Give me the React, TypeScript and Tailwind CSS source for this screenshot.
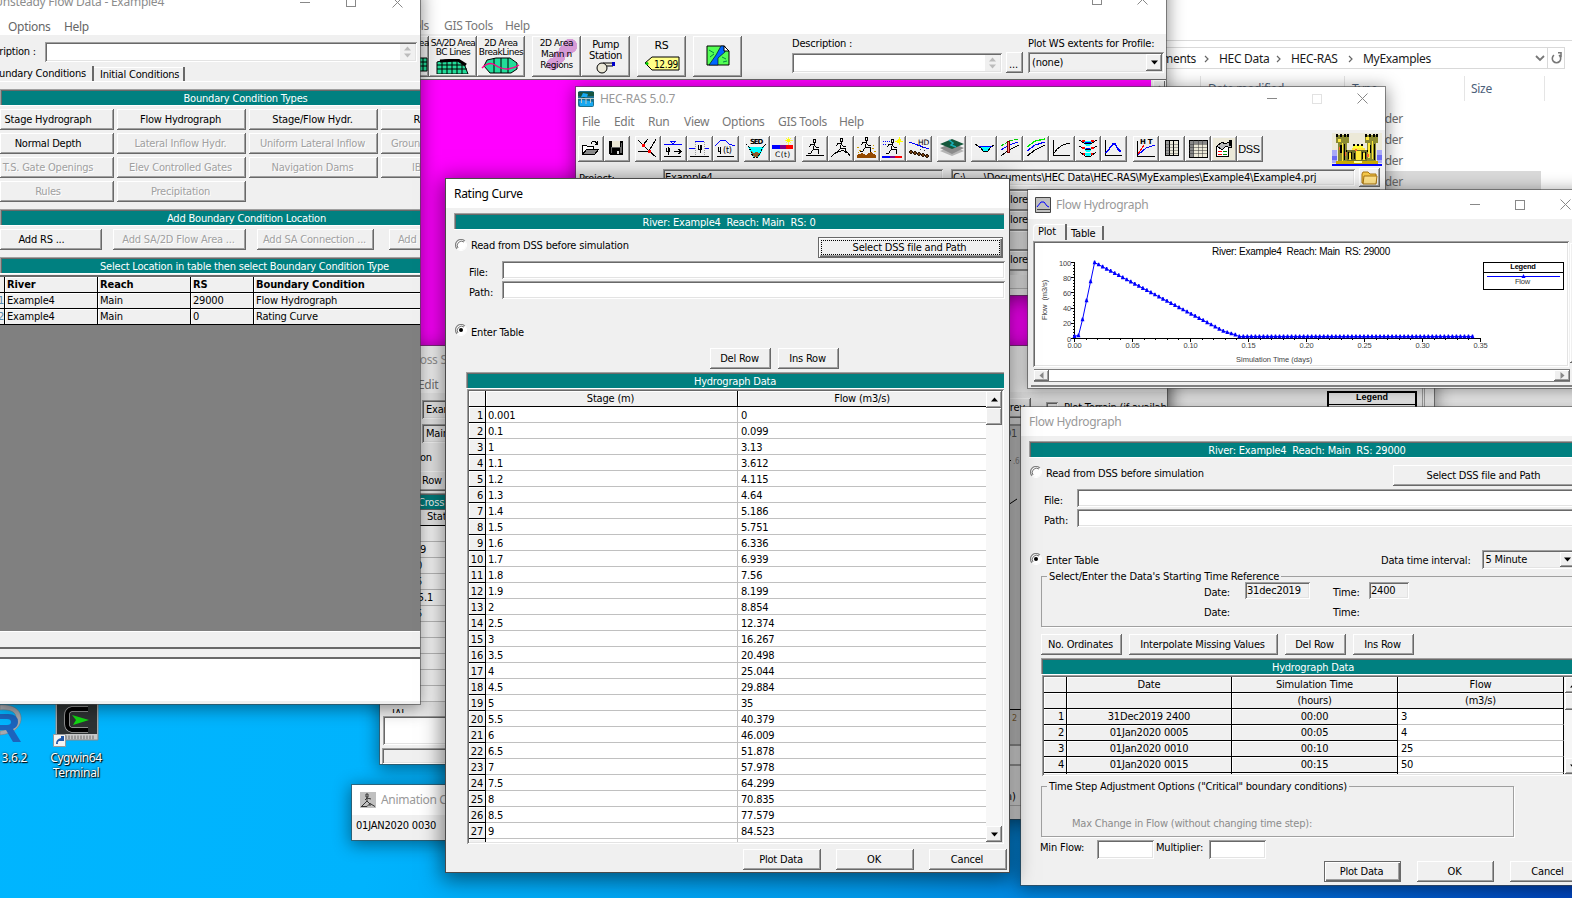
import type { ReactNode } from "react";

const UI = "font-['DejaVu_Sans_Condensed','DejaVu_Sans',sans-serif] text-[11px] leading-[16px] tracking-[-0.2px] text-black";
const SEGOE = "font-['Noto_Sans',sans-serif] text-[12px] leading-[16px] tracking-[-0.3px] whitespace-nowrap";
const RAISED = "bg-[#f0f0f0] shadow-[inset_-1px_-1px_#696969,inset_1px_1px_#fff,inset_-2px_-2px_#a0a0a0]";
const SUNKEN = "shadow-[inset_1px_1px_#a0a0a0,inset_-1px_-1px_#fff,inset_2px_2px_#696969,inset_-2px_-2px_#e3e3e3]";

function Win({ className, children }: { className: string; children?: ReactNode }) {
  return (
    <section className={`absolute flex flex-col overflow-hidden bg-[#f0f0f0] shadow-[0_0_0_1px_rgba(70,70,70,0.6),0_3px_16px_2px_rgba(0,0,0,0.42)] ${UI} ${className}`}>
      {children}
    </section>
  );
}

function Btn({ children, className = "", disabled = false, strong = false }: { children?: ReactNode; className?: string; disabled?: boolean; strong?: boolean }) {
  return (
    <button
      className={`flex shrink-0 items-center justify-center whitespace-nowrap indent-[-2px] ${strong ? "bg-[#f0f0f0] shadow-[inset_0_0_0_1px_#696969,inset_2px_2px_#fff,inset_-2px_-2px_#696969,inset_-3px_-3px_#a0a0a0]" : RAISED} ${disabled ? "text-[#a0a0a0] [text-shadow:1px_1px_#fff]" : ""} ${className}`}
    >
      {children}
    </button>
  );
}

function Teal({ children, className = "" }: { children?: ReactNode; className?: string }) {
  return (
    <div className={`flex h-[16px] shrink-0 items-center justify-center whitespace-pre bg-[#008080] pt-[3px] text-white shadow-[inset_1px_1px_#a0a0a0,inset_2px_2px_#696969,0_1px_#fff] ${className}`}>
      {children}
    </div>
  );
}

function Box({ children, className = "" }: { children?: ReactNode; className?: string }) {
  return <div className={`shrink-0 whitespace-nowrap ${SUNKEN} ${className}`}>{children}</div>;
}

function T({ children, className = "" }: { children?: ReactNode; className?: string }) {
  return <span className={`shrink-0 whitespace-pre ${className}`}>{children}</span>;
}

function Radio({ on = false, className = "" }: { on?: boolean; className?: string }) {
  return (
    <svg width="12" height="12" viewBox="0 0 12 12" className={`shrink-0 ${className}`}>
      <circle cx="6" cy="6" r="5" fill="#fff" />
      <path d="M2.1 9.9A5.4 5.4 0 0 1 9.9 2.1" fill="none" stroke="#808080" strokeWidth="1.2" />
      <path d="M3 9A4.3 4.3 0 0 1 9 3" fill="none" stroke="#505050" strokeWidth="0.8" />
      <path d="M9.9 2.1A5.4 5.4 0 0 1 2.1 9.9" fill="none" stroke="#fff" strokeWidth="1" />
      {on && <circle cx="6" cy="6" r="2" fill="#000" />}
    </svg>
  );
}

function Controls({ dimMax = false, gapA = "w-[35px]", className = "" }: { dimMax?: boolean; gapA?: string; className?: string }) {
  return (
    <div className={`flex items-center ${className}`}>
      <span className="h-px w-[10px] bg-[#888]" />
      <span className={gapA} />
      <span className={`size-[10px] border ${dimMax ? "border-[#e2e2e2]" : "border-[#888]"}`} />
      <span className={gapA} />
      <svg width="11" height="11" viewBox="0 0 11 11" className="shrink-0">
        <path d="M.5.5l10 10M10.5.5l-10 10" stroke="#888" strokeWidth="1" />
      </svg>
    </div>
  );
}

function Tri({ dir = "down", color = "#000" }: { dir?: "up" | "down" | "left" | "right"; color?: string }) {
  const d = { up: "M0 4L3.5 0L7 4z", down: "M0 0h7L3.5 4z", left: "M4 0v7L0 3.5z", right: "M0 0v7L4 3.5z" }[dir];
  return (
    <svg width="7" height="7" viewBox={dir === "up" || dir === "down" ? "0 -1.5 7 7" : "-1.5 0 7 7"}>
      <path d={d} fill={color} />
    </svg>
  );
}

/* ---------- toolbar drawings, each on a 26x26 button ---------- */

const Runner = ({ x = 0, y = 0 }: { x?: number; y?: number }) => (
  <g transform={`translate(${x} ${y})`} fill="none" stroke="#000" strokeWidth="1">
    <path d="M11.500 3.500h2v3h-2zM12.500 7l-1 6M12 8.500H8.500l-1 3M12 8.500l2 2.500h3M11.500 13h4.500v5M11.500 13l-3 4.500H5.500" />
  </g>
);

const ICONS: Record<string, ReactNode> = {
  open: (
    <g stroke="#000" fill="none">
      <path d="M4.500 18.500V9.500h4l1 1h6v3" fill="#fff" />
      <path d="M4.500 18.500l4-5h12l-4 5z" fill="#8a8a8a" />
      <path d="M13 7.500c1-3 4-3 6 0M19.500 4.500v3.500h-3" />
    </g>
  ),
  save: (
    <g>
      <path d="M5 5h14v14H6l-1-1z" fill="#000" />
      <path d="M8 5h8v6H8z" fill="#ece9d8" />
      <path d="M6 6h1v11h1v-5h8v5h2V7h-1v4H7V6z" fill="#666" />
      <path d="M9 14h6v4H9z" fill="#000" />
      <path d="M13 15h2v3h-2z" fill="#ddd" />
    </g>
  ),
  geom: (
    <g fill="none" stroke="#000">
      <path d="M3 4l11 11 7 6M21 3l-7 12M3 15.500h11M13 3L8 9" />
      <path d="M7 8h2v2H7zM13 14h2v2h-2z" fill="red" stroke="red" />
    </g>
  ),
  steady: (
    <g fill="none" stroke="#000">
      <path d="M3 8.500h18M9.500 5.500h5l-2.500 3z" stroke="#00f" />
      <path d="M3 20.500h17M13 15.500h7M17.500 13l2.500 2.500-2.500 2.500M5.500 11.500v4h3v-4M7.500 11v8" />
    </g>
  ),
  quasi: (
    <g fill="none" stroke="#000">
      <path d="M2 12.500h6M8 5.500h9M17 12.500h5" stroke="#00f" />
      <path d="M8.500 6v13M17.500 6v13" stroke="#999" strokeDasharray="1 1" />
      <path d="M3 20.500h19M11.500 9v4h3V9M13.500 9v8" />
    </g>
  ),
  unsteady: (
    <g fill="none" stroke="#000">
      <path d="M2 10l6-6h4l4 4 6 2" stroke="#00f" />
      <path d="M4 20.500h17M5.500 11v4h2v-4M7.500 11v7" />
      <text x="10" y="17" fontSize="8" stroke="none" fill="#000" fontFamily="DejaVu Sans">(t)</text>
    </g>
  ),
  sed: (
    <g>
      <text x="6" y="8" fontSize="7" fontWeight="bold" fontFamily="DejaVu Sans" textLength="13">SED</text>
      <path d="M4 11h16l-5 10h-6z" fill="#0ff" />
      <path d="M7 15l3 6h4l3-6-2 2-3-1-2 1z" fill="#8b5a2b" />
      <path d="M2 8l3 3 4 10h5l5-10 3-3" fill="none" stroke="#000" strokeDasharray="2 1" />
    </g>
  ),
  ct: (
    <g>
      <path d="M2 9h8v4H2z" fill="#00f" /><path d="M10 9h6v4h-6z" fill="#80008a" /><path d="M16 9h7v4h-7z" fill="red" />
      <circle cx="18.500" cy="4.500" r="2" fill="#ff0" />
      <path d="M18.500 1v8M15 4.500h8M16 2l5 5M21 2l-5 5" stroke="#ff0" strokeWidth=".7" />
      <text x="5" y="21" fontSize="7.500" fontFamily="DejaVu Sans" textLength="15">C(t)</text>
    </g>
  ),
  run1: (<g><Runner /><path d="M4 19.500h18" stroke="#000" /></g>),
  run2: (<g><Runner x={1} y={-1} /><path d="M3 21q4-5 10-6t9 5" stroke="#000" fill="none" /></g>),
  run3: (
    <g>
      <Runner y={-2} />
      <path d="M3 22v-3l5-2 4 2 5-3 5 3v3z" fill="#964b00" />
      <path d="M3 11h2M5 14h2M18 12h2M20 15h2M4 16h1M19 9h1" stroke="#c90" />
    </g>
  ),
  run4: (
    <g>
      <path d="M3 5.500h7M3 8l4 1" stroke="#00f" strokeDasharray="1 1" />
      <Runner />
      <path d="M2 20h8v2H2z" fill="#00f" /><path d="M10 20h5v2h-5z" fill="#80008a" /><path d="M15 20h7v2h-7z" fill="red" />
      <circle cx="19" cy="5" r="2" fill="#ff0" />
      <path d="M19 1v8M15 5h8" stroke="#ff0" />
    </g>
  ),
  hd: (
    <g>
      <text x="12" y="9" fontSize="7.500" fontFamily="DejaVu Sans">HD</text>
      <path d="M3 6l20 7" stroke="#00f" />
      <path d="M14 14l3-3M18 15l2-2" stroke="#333" strokeDasharray="2 1" />
      {[5, 9, 13, 17, 21].map((x, i) => <circle key={x} cx={x} cy={16 + i} r="1.900" fill="#6b3a10" stroke="#000" strokeWidth=".6" />)}
    </g>
  ),
  layers: (
    <g>
      <path d="M3 15l12-5 12 5-12 5z" fill="#b5b5b5" /><path d="M3 12l12-5 12 5-12 6z" fill="#8c8c8c" />
      <path d="M3 8l12-5 12 5-12 5z" fill="#14583c" /><path d="M12 4l4 3-2 2 5 2" stroke="#18b0b8" strokeWidth="1.500" fill="none" />
    </g>
  ),
  xs: (<g><path d="M8 11h12l-4 4h-4z" fill="#0ff" /><path d="M4 8l6 4 2 3h5l2-3 4-3" stroke="#000" fill="none" /><path d="M8 10.500h13" stroke="#00f" /></g>),
  prof1: (
    <g fill="none">
      <path d="M4 10l8-5 9-2" stroke="#0c0" strokeDasharray="4 1" /><path d="M4 14l8-5 9-3" stroke="#00f" /><path d="M4 20l8-6 10-5" stroke="#000" />
      <path d="M10.500 5.500h2v11h-2z" stroke="#800000" fill="#f88" />
    </g>
  ),
  prof2: (
    <g fill="none" strokeWidth="1.200">
      <path d="M4 11l8-6 10-2" stroke="#0e0" /><path d="M4 15l8-6 10-3" stroke="#00f" /><path d="M4 20l8-6 10-5" stroke="#000" />
    </g>
  ),
  rating: (<path d="M4.500 4v15.500H21M5 17c4-6 8-9 16-10" fill="none" stroke="#000" />),
  xyz: (
    <g fill="none" stroke="#000">
      <path d="M8 5h10l-3 5h-4zM9 12h8l-2 4h-4zM9 17h8l-3 4h-2z" fill="#0ff" stroke="none" />
      <path d="M4 4l5 3h8l5-3M4 10l6 3h6l6-3M5 16l5 4h6l5-4" />
      <path d="M7 5h3M16 5h3M7 12h3M16 12h3M8 18h2M16 18h2" stroke="red" strokeWidth="2" />
      <path d="M10 6h6M11 12h4" stroke="#00f" />
    </g>
  ),
  hydro: (<g fill="none"><path d="M4.500 4v15.500H21" stroke="#000" /><path d="M5 17l7-9 2 0 3 5 3 3" stroke="#00f" strokeWidth="1.500" /></g>),
  ht: (
    <g fill="none">
      <text x="7" y="8" fontSize="7" fontFamily="DejaVu Sans" fill="#000" fontWeight="bold" letterSpacing="2">HT</text>
      <path d="M4.500 5v15.500H22" stroke="#000" /><path d="M5 18l6-9" stroke="red" /><path d="M5 19l8-7 9-3" stroke="#00f" />
    </g>
  ),
  tab1: (
    <g>
      <path d="M6 4h14v16H6z" fill="#000" /><path d="M7 5h3v14H7z" fill="#999" /><path d="M11 5h3v14h-3zM15 5h4v14h-4z" fill="#ece9d8" />
      <path d="M7 8.500h12M7 11.500h12M7 14.500h12M7 17.500h12" stroke="#333" strokeWidth=".4" />
    </g>
  ),
  tab2: (
    <g>
      <path d="M4 4h18v17H4z" fill="#ece9d8" stroke="#000" /><path d="M4.500 4.500h17v3h-17zM4.500 4.500h4v16h-4z" fill="#888" />
      <path d="M4 8.500h18M4 11.500h18M4 14.500h18M4 17.500h18M8.500 4v17M13 4v17M17.500 4v17" stroke="#333" strokeWidth=".5" />
    </g>
  ),
  props: (
    <g>
      <path d="M2 2h22v22H2z" fill="#ece9d8" />
      <path d="M5.500 10.500h12v10h-12z" fill="#fff" stroke="#000" />
      <path d="M7 15.500h4M7 18.500h4" stroke="red" /><path d="M12 15.500h4M12 18.500h4" stroke="#080" />
      <path d="M6 10l5-4 3 2 6-3v6l-3 0-2-1-4 4z" fill="#bbb" stroke="#000" /><path d="M18 4h3v6h-3z" fill="#000" />
    </g>
  ),
};

function Tool({ name, className = "" }: { name: string; className?: string }) {
  return (
    <span className={`block h-[26px] w-[26px] shrink-0 ${RAISED} ${className}`}>
      <svg width="26" height="26" viewBox="0 0 26 26" fill="#000" shapeRendering="crispEdges">{ICONS[name]}</svg>
    </span>
  );
}

/* ---------- windows ---------- */

function Explorer() {
  const crumbs = ["HEC Data", "HEC-RAS", "MyExamples"];
  return (
    <section className={`absolute left-[1150px] top-0 flex h-[500px] w-[422px] flex-col bg-white ${SEGOE} text-[#1a1a1a]`}>
      <div className="h-[41px] border-b border-[#d9d9d9]" />
      <div className="mt-[6px] flex h-[22px] w-[415px] shrink-0 items-center border border-[#d9d9d9]">
        <span className="flex w-[45px] justify-end pt-px">ments</span>
        {crumbs.map((c, i) => (
          <span key={c} className="flex items-center pt-px">
            <svg width="5" height="8" viewBox="0 0 5 8" className="ml-[8px] mr-[10px]"><path d="M1 1l3 3-3 3" fill="none" stroke="#666" strokeWidth="1.200" /></svg>
            <span className={i === 2 ? "w-[68px]" : "w-[49px]"}>{c}</span>
          </span>
        ))}
        <svg width="10" height="7" viewBox="0 0 10 7" className="ml-auto mr-[2px]"><path d="M1 1l4 4 4-4" fill="none" stroke="#777" strokeWidth="1.800" /></svg>
        <span className="flex h-full w-[17px] items-center justify-center border-l border-[#d9d9d9]">
          <svg width="11" height="12" viewBox="0 0 11 12"><path d="M3 3.200a4.200 4.200 0 1 0 5 0M4 .8h-3v4.400" transform="matrix(-1 0 0 1 11 0)" fill="none" stroke="#777" strokeWidth="1.600" /></svg>
        </span>
      </div>
      <div className="mt-[7px] flex h-[25px] shrink-0 items-center text-[#4c607a]">
        <span className="ml-[50px] flex h-full w-[144px] items-center border-l border-[#e5e5e5] pl-[7px]">Date modified</span>
        <span className="flex h-full w-[120px] items-center border-l border-[#e5e5e5] pl-[7px]">Type</span>
        <span className="flex h-full w-[81px] items-center border-x border-[#e5e5e5] pl-[6px]">Size</span>
      </div>
      <div className="mt-[7px] flex w-[391px] flex-col text-[#6d6d6d]">
        {[0, 1, 2, 3].map((i) => (
          <div key={i} className={`flex h-[21px] items-center ${i === 3 ? "bg-[#d9d9d9]" : ""}`}>
            <span className="flex w-[253px] justify-end">File folder</span>
          </div>
        ))}
      </div>
    </section>
  );
}

function BigBtn({ children, className = "" }: { children?: ReactNode; className?: string }) {
  return <div className={`flex h-[41px] shrink-0 flex-col items-center overflow-hidden whitespace-nowrap font-['DejaVu_Sans',sans-serif] text-[9px] leading-[9px] tracking-[-0.4px] ${RAISED} ${className}`}>{children}</div>;
}

function GeometryWindow() {
  return (
    <Win className="left-[300px] top-[-30px] h-[500px] w-[866px]">
      <div className="flex h-[64px] shrink-0 flex-col bg-white">
        <Controls className="ml-[747px] mt-[24px]" gapA="w-[35px]" />
        <div className={`mt-[13px] flex ${SEGOE} text-[#777]`}>
          <span className="flex w-[129px] justify-end">Tools</span>
          <span className="ml-[15px] w-[61px]">GIS Tools</span>
          <span>Help</span>
        </div>
      </div>
      <div className="flex h-[45px] shrink-0 items-start pt-[2px]">
        <BigBtn className="ml-[81px] w-[48px]">
          <span className="mt-[3px] self-end">2D Area</span>
          <svg width="40" height="16" className="mt-[9px] self-end"><path d="M0 1h38v13H0z" fill="#2d9" stroke="#000" /><path d="M30 1v13M34 1v13M0 5h38M0 9h38" stroke="#000" /></svg>
        </BigBtn>
        <BigBtn className="w-[48px]">
          <span className="mt-[3px] tracking-[-0.7px]">SA/2D Area</span>
          <span className="tracking-[-0.5px]">BC Lines</span>
          <svg width="34" height="15" viewBox="0 0 34 15" className="mt-[2px]"><path d="M1 3l8-2h12l8 6 3 8H1z" fill="#2d9" stroke="#000" /><path d="M1 6h28M1 10h30M6 2v13M11 1v14M16 1v14M21 2v13M26 5v10" stroke="#000" /><path d="M4 2l18-1 8 5" stroke="#000" strokeWidth="3" fill="none" /></svg>
        </BigBtn>
        <BigBtn className="w-[48px]">
          <span className="mt-[3px]">2D Area</span>
          <span className="tracking-[-0.5px]">BreakLines</span>
          <svg width="40" height="17" viewBox="0 0 40 17"><path d="M3 9l3-6 9-2h14l7 5v6l-6 4H9z" fill="#2d9" stroke="#000" /><path d="M13 1v15M20 1v15M27 1v15" stroke="#000" /><path d="M1 11q7-7 13-3t12 4 12-4" fill="none" stroke="#f08" strokeWidth="1.500" /></svg>
        </BigBtn>
        <BigBtn className="ml-[7px] w-[49px]">
          <div className="flex size-full flex-col items-center bg-[radial-gradient(circle_at_38px_10px,#d69ad6_7px,transparent_7.500px),radial-gradient(circle_at_33px_15px,#d69ad6_6px,transparent_6.500px),radial-gradient(circle_at_27px_21px,#d69ad6_6px,transparent_6.500px),radial-gradient(circle_at_21px_28px,#d69ad6_6px,transparent_6.500px)] leading-[11px]">
            <span className="mt-[2px]">2D Area</span><span>Mann n</span><span>Regions</span>
          </div>
        </BigBtn>
        <BigBtn className="w-[49px] text-[10px] leading-[11px] tracking-[-0.2px]">
          <span className="mt-[3px]">Pump</span><span>Station</span>
          <svg width="22" height="13" viewBox="0 0 22 13"><path d="M8 2h10v3h-6" fill="#ece9d8" stroke="#000" /><path d="M17 1h3v4h-3z" fill="#00c" /><circle cx="7" cy="7" r="5" fill="#ece9d8" stroke="#000" /></svg>
        </BigBtn>
        <BigBtn className="ml-[7px] w-[49px] text-[11px] leading-[12px]">
          <span className="mt-[4px]">RS</span>
          <svg width="36" height="15" viewBox="0 0 36 15" className="mt-[4px]"><path d="M1 7l7-6h27v13H8z" fill="#ff8" stroke="#000" /><circle cx="3" cy="7.500" r="1.500" fill="#0c0" /><text x="10" y="11.500" fontSize="10.500" textLength="24" lengthAdjust="spacingAndGlyphs" fontFamily="DejaVu Sans Condensed">12.99</text></svg>
        </BigBtn>
        <BigBtn className="ml-[7px] w-[49px]">
          <svg width="24" height="21" viewBox="0 0 24 21" className="mt-[9px]"><path d="M1 1h17l5 5v14H1z" fill="#5f5" stroke="#000" /><path d="M15 1h4v6L12 13v7H3l7-10z" fill="#06f" stroke="#000" strokeWidth=".6" /><path d="M3 5l5 3M4 12l4-3M16 12l4 2M17 17l4-1" stroke="#084" /><path d="M18 1l5 5h-5z" fill="#fff" stroke="#000" /></svg>
        </BigBtn>
        <div className="ml-[50px] flex w-[233px] flex-col">
          <span>Description :</span>
          <div className="flex items-center">
            <Box className="flex h-[20px] w-[210px] justify-end bg-white p-[2px]">
              <span className="flex w-[15px] flex-col items-center justify-between bg-[#f0f0f0] py-[1px]"><Tri dir="up" color="#bbb" /><Tri color="#bbb" /></span>
            </Box>
            <Btn className="ml-[4px] h-[21px] w-[17px] pt-[5px]">...</Btn>
          </div>
        </div>
        <div className="ml-[3px] flex flex-col">
          <T>Plot WS extents for Profile:</T>
          <Box className="flex h-[21px] w-[136px] items-center justify-between pl-[4px] pr-[2px]">
            (none) <Btn className="h-[17px] w-[16px]"><Tri /></Btn>
          </Box>
        </div>
      </div>
      <div className="flex flex-1 border-t border-[#696969]">
        <div className="w-[851px] bg-[#ff00ff]" />
        <div className="ml-[2px] flex w-[12px] justify-center bg-[#f0f0f0] pt-[4px] shadow-[inset_1px_1px_#fff,inset_-1px_0_#696969]"><Tri dir="up" color="#999" /></div>
      </div>
    </Win>
  );
}

function Castle() {
  return (
    <svg width="50" height="33" viewBox="0 0 50 33" shapeRendering="crispEdges" className="shrink-0">
      <path d="M0 0h50v33H0z" fill="#ece9d8" />
      <path d="M0 17h5v13H0zM45 17h5v13h-5z" fill="#a8a8f8" />
      <path d="M0 23h5v4H0zM45 22h5v5h-5z" fill="#6a6af4" />
      <path d="M4 2h13v8H4zM33 2h13v8H33z" fill="#8a8a30" />
      <path d="M6 8h9v22H6zM35 8h9v22h-9z" fill="#8a8a30" />
      <path d="M4 1h2v3H4zM8 1h2v3H8zM12 1h2v3h-2zM15 1h2v3h-2zM33 1h2v3h-2zM37 1h2v3h-2zM41 1h2v3h-2zM44 1h2v3h-2zM8 12h2v8H8zM12 11h1v16h-1zM37 12h2v8h-2zM42 11h1v16h-1zM14 17h22v2H14z" fill="#000" />
      <path d="M6 6h3v3H6zM36 10h2v15h-2zM40 8h1v18h-1zM10 10h1v18h-1zM34 4h3v3h-3z" fill="#ffe838" />
      <path d="M15 17h20v12H15z" fill="#6e6e28" />
      <path d="M21 12h10v5H21z" fill="#ff3" />
      <path d="M21 11h2v2h-2zM25 11h2v2h-2zM29 11h2v2h-2zM16 19h1v7h-1zM19 19h1v7h-1zM22 20h1v6h-1zM30 19h1v7h-1zM33 19h1v7h-1z" fill="#000" />
      <path d="M20 15h13v2H20zM24 18h5v9h-5zM17 20h2v7h-2zM31 20h2v7h-2z" fill="#ffe838" />
      <path d="M7 14h1v3H7zM13 19h1v4h-1zM35 21h2v3h-2zM23 16h2v2h-2z" fill="#f63" />
      <path d="M4 28h42v3H4z" fill="#c8a800" /><path d="M22 28h8v2h-8z" fill="#ff9" />
      <path d="M0 31h50v2H0z" fill="#00f" />
    </svg>
  );
}

function HecRasWindow() {
  const menu: [string, string][] = [["File", "w-[32px]"], ["Edit", "w-[34px]"], ["Run", "w-[36px]"], ["View", "w-[38px]"], ["Options", "w-[56px]"], ["GIS Tools", "w-[61px]"], ["Help", "w-[40px]"]];
  return (
    <Win className="left-[576px] top-[87px] h-[208px] w-[809px]">
      <div className="flex h-[43px] shrink-0 flex-col bg-white">
        <div className="flex h-[23px] items-center">
          <svg width="16" height="16" viewBox="0 0 16 16" className="ml-[2px]"><rect width="16" height="16" rx="2" fill="#1c6f8c" /><path d="M0 1h16v4H9L6 7 0 5z" fill="#175540" /><path d="M5 2l5 1-1 3H3zM1 10l4-1 6 1 4 1v4H2z" fill="#18a8f0" /><path d="M0 7.500h16M3.500 7v5M8 7v6M12.500 7v5" stroke="#b8c8c8" /></svg>
          <span className={`ml-[6px] text-[#999] ${SEGOE}`}>HEC-RAS 5.0.7</span>
          <Controls dimMax className="ml-auto mr-[17px]" />
        </div>
        <div className={`flex pl-[6px] pt-[4px] text-[#777] ${SEGOE}`}>{menu.map(([m, w]) => <span key={m} className={w}>{m}</span>)}</div>
      </div>
      <div className="flex h-[37px] shrink-0 items-center pl-[2px]">
        <Tool name="open" /><Tool name="save" />
        <Tool name="geom" className="ml-[5px]" /><Tool name="steady" /><Tool name="quasi" /><Tool name="unsteady" />
        <Tool name="sed" className="ml-[5px]" /><Tool name="ct" />
        <Tool name="run1" className="ml-[6px]" /><Tool name="run2" /><Tool name="run3" /><Tool name="run4" /><Tool name="hd" />
        <span className={`ml-[5px] block h-[26px] w-[29px] shrink-0 ${RAISED}`}><svg width="29" height="26" viewBox="0 0 29 26">{ICONS.layers}</svg></span>
        <Tool name="xs" className="ml-[5px]" /><Tool name="prof1" /><Tool name="prof2" /><Tool name="rating" /><Tool name="xyz" /><Tool name="hydro" />
        <Tool name="ht" className="ml-[6px]" /><Tool name="tab1" /><Tool name="tab2" /><Tool name="props" />
        <Btn className="h-[26px] w-[26px] font-['Liberation_Sans',sans-serif] text-[11px] tracking-[-0.4px]">DSS</Btn>
        <span className="ml-auto mr-[3px] pt-[2px]"><Castle /></span>
      </div>
      <div className="flex h-[21px] shrink-0 items-center">
        <T className="ml-[3px] w-[84px] pt-[2px]">Project:</T>
        <Box className="h-[17px] w-[280px] bg-[#f0f0f0] px-[2px] pt-[1px]">Example4</Box>
        <Box className="ml-[8px] h-[17px] w-[404px] bg-[#f0f0f0] px-[2px] pt-[1px]"><span className="whitespace-pre">C:\...   \Documents\HEC Data\HEC-RAS\MyExamples\Example4\Example4.prj</span></Box>
        <span className={`ml-[4px] flex h-[19px] w-[21px] items-center justify-center ${RAISED}`}>
          <svg width="17" height="14" viewBox="0 0 17 14"><path d="M1 12V3l1-2h5l2 2h6v9z" fill="#f5c84a" stroke="#a87410" /><path d="M2 13l1-8h13l-1 8z" fill="#ffe28a" stroke="#a87410" /></svg>
        </span>
      </div>
      <div className="mt-px h-[2px] w-[804px] shrink-0 bg-[#808080]" />
      <div className="ml-[432px] flex w-[22px] flex-col shadow-[inset_8px_0_8px_rgba(0,0,0,0.12)]">
        {["lore", "lore", "", "lore"].map((t, i) => (
          <div key={i} className="flex h-[20px] shrink-0 items-center border-b-2 border-[#8a8a8a] bg-[#e8e8e8] pl-[2px] shadow-[inset_0_1px_#fff]">{t}</div>
        ))}
        <div className="mt-[4px] h-[14px] border-b border-[#bbb] bg-[#eaeaea]" />
      </div>
    </Win>
  );
}

function CrossSectionWindows() {
  const vals = ["", ".29", "10", "15", "15.1", "15", "", "", "", "", ""];
  return (
    <>
      <Win className="left-[600px] top-[346px] h-[473px] w-[567px]">
        <div className="h-[46px] shrink-0 bg-[#f8f8f8]" />
        <div className="flex h-[32px] shrink-0 items-center">
          <Btn className="ml-[390px] h-[20px] w-[41px] justify-end pr-[6px]">Prev</Btn>
          <span className={`ml-[15px] size-[12px] shrink-0 bg-[#f0f0f0] ${SUNKEN}`} />
          <T className="ml-[6px]">Plot Terrain (if available)</T>
        </div>
        <div className="flex h-[322px] shrink-0 flex-col border-y-2 border-[#999] bg-[#d4d4d4] pl-[405px]">
          <span className="text-[#555]">01</span>
          <svg width="24" height="60" viewBox="0 0 24 60" className="mt-[14px] shrink-0"><path d="M0 4.500h6M0 51l12-8" stroke="#000" /><text x="8" y="8" fontSize="8" fill="#888">.6</text></svg>
          <span className="mt-[193px] h-px w-[20px] shrink-0 bg-black" />
          <span className="pl-[7px] text-[9px] text-[#863]">2</span>
        </div>
        <div className="h-[20px] shrink-0 border-b-2 border-[#a0a0a0]" />
        <div className="mt-[22px] flex h-[18px] shrink-0 items-end border-b border-[#bbb] pl-[400px]">on)</div>
      </Win>
      <Win className="left-[380px] top-[346px] h-[418px] w-[300px]">
        <div className={`flex h-[47px] shrink-0 flex-col bg-[#fbfbfb] text-[#999] ${SEGOE}`}>
          <span className="mt-[6px] flex w-[70px] justify-start pl-[28px]">Cross Section</span>
          <span className="mt-[9px] pl-[38px] text-[#777]">Edit</span>
        </div>
        <Box className="ml-[42px] mt-[7px] flex h-[19px] w-[150px] items-center pl-[4px] pt-px">Example4</Box>
        <Box className="ml-[42px] mt-[5px] flex h-[19px] w-[150px] items-center pl-[4px] pt-px">Main</Box>
        <span className="ml-[20px] mt-[7px]">Option</span>
        <Btn className="ml-[14px] mt-[5px] h-[20px] w-[60px] justify-end pr-[12px]">Ins Row</Btn>
        <Teal className="mt-[2px] w-[250px] !justify-start pl-[38px]">Cross Section</Teal>
        <div className="flex h-[17px] shrink-0 items-center border-b border-black pl-[47px] shadow-[inset_0_1px_#696969]">Station</div>
        {vals.map((v, i) => (
          <div key={i} className="flex h-[16px] shrink-0 items-center border-b border-[#c0c0c0] bg-white">
            <span className={`flex justify-end ${v === "15.1" ? "w-[53px]" : v === ".29" ? "w-[46px]" : "w-[42px]"}`}>{v}</span>
          </div>
        ))}
        <div className="mt-[5px] h-[8px] overflow-hidden pl-[12px] leading-[14px]">ΙΑΙ</div>
        <Box className="ml-[3px] mt-[3px] h-[29px] w-[290px] bg-white" />
        <Box className="ml-[2px] mt-[3px] h-[16px] w-[292px]" />
      </Win>
    </>
  );
}

function ProfilePlotWindow() {
  return (
    <>
      <Win className="left-[1300px] top-[300px] h-[200px] w-[290px] !bg-white" />
      <Win className="left-[1167px] top-[300px] h-[200px] w-[267px] !bg-[#f8f8f8]">
        <div className="flex h-full items-end">
          <div className="ml-[160px] flex h-[109px] w-[90px] flex-col border-2 border-black bg-white font-['Liberation_Sans',sans-serif] text-[9px] font-bold leading-[9px] tracking-normal">
            <span className="flex h-[12px] items-center justify-center border-b border-black pb-[2px]">Legend</span>
          </div>
          <div className="ml-[5px] h-full w-[3px] border-x border-[#aaa]" />
        </div>
      </Win>
    </>
  );
}

function UnsteadyWindow() {
  const rows: [string, boolean][][] = [
    [["Stage Hydrograph", true], ["Flow Hydrograph", true], ["Stage/Flow Hydr.", true], ["Rating Curve", true]],
    [["Normal Depth", true], ["Lateral Inflow Hydr.", false], ["Uniform Lateral Inflow", false], ["Groundwater Interflow", false]],
    [["T.S. Gate Openings", false], ["Elev Controlled Gates", false], ["Navigation Dams", false], ["IB Stage/Flow", false]],
    [["Rules", false], ["Precipitation", false]],
  ];
  const cell = "flex h-full items-center pl-[2px] border-r border-black shadow-[inset_1px_1px_#fff]";
  return (
    <Win className="left-0 top-[-10px] h-[714px] w-[420px]">
      <div className="flex h-[45px] shrink-0 flex-col bg-white">
        <div className={`flex h-[25px] items-center text-[#8c8c8c] ${SEGOE}`}>
          <span className="flex w-[164px] justify-end pb-px tracking-[-0.25px]">Unsteady Flow Data - Example4</span>
          <Controls className="ml-[136px] pb-px" gapA="w-[36px]" />
        </div>
        <div className={`flex pl-[8px] pt-[4px] text-[#666] ${SEGOE}`}><span className="w-[56px]">Options</span><span>Help</span></div>
      </div>
      <div className="flex h-[31px] shrink-0 items-center pt-[2px]">
        <span className="flex w-[36px] shrink-0 justify-end whitespace-nowrap pt-px">Description :</span>
        <Box className="ml-[9px] flex h-[20px] w-[372px] justify-end bg-white p-[2px]">
          <span className="flex w-[15px] flex-col items-center justify-between bg-[#f0f0f0] py-[1px]"><Tri dir="up" color="#bbb" /><Tri color="#bbb" /></span>
        </Box>
      </div>
      <div className="flex h-[16px] shrink-0 items-end border-b border-white">
        <span className="flex h-[15px] w-[94px] shrink-0 items-start justify-end whitespace-nowrap border-r-2 border-[#696969] pr-[6px]"><span>Boundary Conditions</span></span>
        <span className="flex h-[14px] w-[91px] items-start whitespace-nowrap border-r-2 border-[#696969] pl-[6px] shadow-[inset_0_1px_#fff]">Initial Conditions</span>
      </div>
      <Teal className="mt-[7px] h-[15px] pl-[71px]">Boundary Condition Types</Teal>
      <div className="mt-[4px] flex w-[520px] flex-col gap-[3px]">
        {rows.map((r, i) => (
          <div key={i} className="flex gap-[3px]">
            {r.map(([t, on], j) => (
              <Btn key={t} disabled={!on} className={j === 0 ? "h-[21px] w-[114px] !justify-center pr-[16px]" : "h-[21px] w-[129px]"}>{t}</Btn>
            ))}
          </div>
        ))}
      </div>
      <Teal className="mt-[7px] h-[15px] pl-[73px]">Add Boundary Condition Location</Teal>
      <div className="mt-[4px] flex w-[520px]">
        <Btn className="h-[21px] w-[102px] pr-[17px]">Add RS ...</Btn>
        <Btn disabled className="ml-[11px] h-[21px] w-[133px]">Add SA/2D Flow Area ...</Btn>
        <Btn disabled className="ml-[11px] h-[21px] w-[117px]">Add SA Connection ...</Btn>
        <Btn disabled className="ml-[15px] h-[21px] w-[117px]">Add Pump Station ...</Btn>
      </div>
      <Teal className="mt-[7px] h-[15px] pl-[69px]">Select Location in table then select Boundary Condition Type</Teal>
      <div className="mt-[2px] flex flex-1 flex-col border-t-2 border-[#696969] bg-[#808080]">
        {[["", "River", "Reach", "RS", "Boundary Condition"], ["1", "Example4", "Main", "29000", "Flow Hydrograph"], ["2", "Example4", "Main", "0", "Rating Curve"]].map((r, i) => (
          <div key={i} className={`flex h-[16px] shrink-0 items-center whitespace-nowrap border-b border-black bg-[#f0f0f0] ${i === 0 ? "font-bold tracking-[-0.1px]" : ""}`}>
            <span className="flex h-full w-[5px] items-center justify-end border-r border-black text-[#58a]">{r[0]}</span>
            <span className={`${cell} w-[93px]`}>{r[1]}</span>
            <span className={`${cell} w-[93px]`}>{r[2]}</span>
            <span className={`${cell} w-[63px]`}>{r[3]}</span>
            <span className="flex h-full flex-1 items-center pl-[2px] shadow-[inset_1px_1px_#fff]">{r[4]}</span>
          </div>
        ))}
      </div>
      <div className="h-[18px] shrink-0 border-b-2 border-[#696969] shadow-[inset_0_1px_#fff]" />
      <div className="h-[8px] shrink-0" />
      <div className="h-[46px] shrink-0 border-b-2 border-t-2 border-b-[#f0f0f0] border-t-[#696969] bg-white" />
      <div className="h-px shrink-0" />
    </Win>
  );
}

const FLOWS: number[] = (() => {
  const v = [3, 4, 25, 50, 75, 100];
  for (let i = 6; i < 100; i++) v.push(i < 38 ? 100 - (i - 5) * 2.82 : i < 41 ? 8 - (i - 38) * 1.6 : 2.5);
  return v;
})();

function HydrographChart() {
  const X = (i: number) => 39.5 + i * 4.02;
  const Y = (v: number) => 95.5 - v * 0.76;
  return (
    <svg width="532" height="122" viewBox="0 0 532 122" fontFamily="Liberation Sans" className="block">
      <text x="177" y="12" fontSize="10" textLength="178" xmlSpace="preserve">River: Example4  Reach: Main  RS: 29000</text>
      <g stroke="#000" shapeRendering="crispEdges">
        <path d="M39.500 19V96M38 95.500H446" fill="none" />
        {Array.from({ length: 26 }, (_, i) => <path key={i} d={`M${i % 5 ? 37.500 : 36} ${95.500 - i * 3.040}H40`} />)}
        {Array.from({ length: 36 }, (_, i) => <path key={i} d={`M${39.500 + i * 11.600} 95V${i % 5 ? 97 : 99}`} />)}
      </g>
      <g fontSize="7.500" fill="#444">
        {[0, 20, 40, 60, 80, 100].map((v) => <text key={v} x="36" y={Y(v) + 3} textAnchor="end">{v}</text>)}
        {[0, 1, 2, 3, 4, 5, 6, 7].map((v) => <text key={v} x={39.500 + v * 58} y="105" textAnchor="middle">{(v * 0.05).toFixed(2)}</text>)}
        <text x="201" y="119" textLength="76">Simulation Time (days)</text>
        <text transform="translate(11.500 77) rotate(-90)" textLength="40" xmlSpace="preserve">Flow  (m3/s)</text>
      </g>
      <polyline points={FLOWS.map((v, i) => `${X(i)},${Y(v)}`).join(" ")} fill="none" stroke="#00f" />
      <path d={FLOWS.map((v, i) => `M${X(i) - 1.900} ${Y(v) + 1.700}h3.800l-1.300 -3.700h-1.200z`).join("")} fill="#00f" />
      <path d="M448.500 19.500h80v27h-80zM448.500 29.500h80" fill="#fff" stroke="#000" shapeRendering="crispEdges" strokeWidth="1" />
      <text x="488" y="25.500" fontSize="7.500" fontWeight="bold" textAnchor="middle">Legend</text>
      <path d="M452 33.500h73" stroke="#00f" /><path d="M486.500 35h4l-2-4z" fill="#00f" />
      <text x="487.500" y="41" fontSize="7.500" textAnchor="middle" fill="#333">Flow</text>
    </svg>
  );
}

function FlowPlotWindow() {
  return (
    <Win className="left-[1028px] top-[190px] h-[198px] w-[560px]">
      <div className="flex h-[29px] shrink-0 items-center bg-white pr-[17px]">
        <svg width="16" height="16" viewBox="0 0 16 16" className="ml-[7px]"><path d="M.5.500h15v15H.5z" fill="#c0c0c0" stroke="#444" /><path d="M2 12.500h13" stroke="#444" /><path d="M2 10l4-5h3l3 4 2 1" fill="none" stroke="#00f" /></svg>
        <span className={`ml-[5px] text-[#999] ${SEGOE}`}>Flow Hydrograph</span>
        <Controls className="ml-auto" />
      </div>
      <div className="flex h-[22px] shrink-0 items-end pb-px">
        <span className="ml-[5px] flex h-[16px] w-[34px] items-start rounded-tl-sm border-r-2 border-[#696969] pl-[5px] shadow-[inset_1px_1px_#fff]">Plot</span>
        <span className="flex h-[14px] w-[37px] items-start border-r-2 border-[#696969] pl-[4px] shadow-[inset_0_1px_#fff]">Table</span>
      </div>
      <div className="ml-[5px] flex">
        <div className={`h-[126px] w-[536px] bg-white p-[2px] ${SUNKEN}`}><HydrographChart /></div>
        <div className={`ml-[1px] mt-[2px] h-[120px] w-[16px] ${RAISED}`} />
      </div>
      <div className="ml-[6px] mt-[2px] flex h-[13px] w-[536px] border-y border-[#808080] bg-white">
        <Btn className="h-[11px] w-[15px]"><Tri dir="left" color="#888" /></Btn>
        <span className="flex-1" />
        <Btn className="h-[11px] w-[16px]"><Tri dir="right" color="#888" /></Btn>
      </div>
      <div className="ml-[3px] mt-[3px] h-[2px] bg-[#808080]" />
    </Win>
  );
}

function FlowEditor() {
  const rows = [["1", "31Dec2019 2400", "00:00", "3"], ["2", "01Jan2020 0005", "00:05", "4"], ["3", "01Jan2020 0010", "00:10", "25"], ["4", "01Jan2020 0015", "00:15", "50"], ["", "", "", ""]];
  const c = "flex h-full shrink-0 items-center border-r border-black bg-[#f0f0f0] shadow-[inset_1px_1px_#fff]";
  return (
    <Win className="left-[1021px] top-[407px] h-[478px] w-[572px]">
      <div className={`flex h-[29px] shrink-0 items-center bg-white pl-[8px] text-[#999] ${SEGOE}`}>Flow Hydrograph</div>
      <Teal className="ml-[8px] mt-[5px] w-[556px]">River: Example4  Reach: Main  RS: 29000</Teal>
      <div className="mt-[8px] flex h-[21px] shrink-0 items-start">
        <Radio className="ml-[9px] mt-[1px]" /><T className="ml-[4px] mt-px">Read from DSS before simulation</T>
        <Btn className="ml-auto mr-[17px] h-[21px] w-[183px]">Select DSS file and Path</Btn>
      </div>
      <div className="mt-[3px] flex h-[18px] shrink-0"><T className="ml-[23px] w-[33px] pt-[4px]">File:</T><Box className="h-[18px] w-[508px] bg-white" /></div>
      <div className="mt-[2px] flex h-[18px] shrink-0"><T className="ml-[23px] w-[33px] pt-[4px]">Path:</T><Box className="h-[18px] w-[508px] bg-white" /></div>
      <div className="mt-[22px] flex h-[20px] shrink-0 items-center">
        <Radio on className="ml-[9px]" /><T className="ml-[4px] w-[56px] pt-[3px]">Enter Table</T>
        <T className="ml-[279px] pt-[3px]">Data time interval:</T>
        <Box className="ml-[11px] flex h-[19px] w-[96px] items-center justify-between pl-[4px] pr-[2px]"><span className="pt-[2px]">5 Minute</span> <Btn className="h-[15px] w-[16px]"><Tri /></Btn></Box>
      </div>
      <fieldset className="ml-[20px] mt-px flex h-[57px] w-[545px] shrink-0 flex-col border border-[#a0a0a0] shadow-[1px_1px_#fff]">
        <legend className="ml-[5px] h-[12px] px-[2px] leading-[13px] tracking-[-0.15px]">Select/Enter the Data's Starting Time Reference</legend>
        <div className="flex h-[17px] items-start">
          <T className="ml-[162px] w-[41px] pt-[3px]">Date:</T><Box className="h-[17px] w-[65px] pl-[2px] pt-[1px]">31dec2019</Box>
          <T className="ml-[23px] w-[36px] pt-[3px]">Time:</T><Box className="h-[17px] w-[40px] pl-[2px] pt-[1px]">2400</Box>
        </div>
        <div className="mt-[6px] flex"><T className="ml-[162px] w-[129px]">Date:</T><T>Time:</T></div>
      </fieldset>
      <div className="mt-[7px] flex h-[21px] shrink-0 pl-[20px]">
        <Btn className="w-[81px]">No. Ordinates</Btn><Btn className="ml-[7px] w-[149px]">Interpolate Missing Values</Btn>
        <Btn className="ml-[7px] w-[61px]">Del Row</Btn><Btn className="ml-[7px] w-[61px]">Ins Row</Btn>
      </div>
      <Teal className="ml-[20px] mt-[3px] w-[544px]">Hydrograph Data</Teal>
      <div className={`ml-[21px] mt-px flex h-[101px] w-[544px] shrink-0 overflow-hidden p-[2px] ${SUNKEN}`}>
        <div className="flex shrink-0 flex-col overflow-hidden">
          {[["", "Date", "Simulation Time", "Flow"], ["", "", "(hours)", "(m3/s)"]].map((r, i) => (
            <div key={i} className="flex h-[16px] shrink-0 border-b border-black">
              <span className={`${c} w-[23px]`} /><span className={`${c} w-[165px] justify-center`}>{r[1]}</span><span className={`${c} w-[166px] justify-center`}>{r[2]}</span><span className={`${c} w-[166px] justify-center`}>{r[3]}</span>
            </div>
          ))}
          {rows.map((r, i) => (
            <div key={i} className="flex h-[16px] shrink-0">
              <span className={`${c} w-[23px] justify-end border-b pr-[2px]`}>{r[0]}</span><span className={`${c} w-[165px] justify-center border-b pt-px`}>{r[1]}</span><span className={`${c} w-[166px] justify-center border-b`}>{r[2]}</span>
              <span className="flex h-full w-[166px] items-center border-b border-r border-b-[#c0c0c0] border-r-black bg-white pl-[3px]">{r[3]}</span>
            </div>
          ))}
        </div>
        <div className="flex w-[18px] flex-col justify-between bg-[#f6f6f6] pl-px">
          <div><Btn className="h-[16px] w-[17px]"><Tri dir="up" /></Btn><Btn className="h-[17px] w-[17px]" /></div>
          <Btn className="h-[16px] w-[17px]"><Tri /></Btn>
        </div>
      </div>
      <fieldset className="ml-[20px] mt-[4px] flex h-[57px] w-[473px] shrink-0 flex-col border border-[#a0a0a0] shadow-[1px_1px_#fff]">
        <legend className="ml-[5px] h-[12px] px-[2px] leading-[14px]">Time Step Adjustment Options ("Critical" boundary conditions)</legend>
        <T className="ml-[30px] mt-[24px] text-[#8c8c8c]">Max Change in Flow (without changing time step):</T>
      </fieldset>
      <div className="mt-[3px] flex h-[19px] shrink-0">
        <T className="ml-[19px] w-[57px]">Min Flow:</T><Box className="h-[19px] w-[57px] bg-white" />
        <T className="ml-[2px] w-[53px]">Multiplier:</T><Box className="h-[19px] w-[57px] bg-white" />
      </div>
      <div className="mt-[2px] flex h-[21px] shrink-0 pl-[303px]">
        <Btn strong className="w-[77px]">Plot Data</Btn><Btn className="ml-[16px] w-[77px]">OK</Btn><Btn className="ml-[16px] w-[77px]">Cancel</Btn>
      </div>
    </Win>
  );
}

const CURVE = "0.001 0|0.1 0.099|1 3.13|1.1 3.612|1.2 4.115|1.3 4.64|1.4 5.186|1.5 5.751|1.6 6.336|1.7 6.939|1.8 7.56|1.9 8.199|2 8.854|2.5 12.374|3 16.267|3.5 20.498|4 25.044|4.5 29.884|5 35|5.5 40.379|6 46.009|6.5 51.878|7 57.978|7.5 64.299|8 70.835|8.5 77.579|9 84.523| "
  .split("|").map((s) => s.split(" "));

function RatingCurve() {
  return (
    <Win className="left-[446px] top-[179px] h-[693px] w-[563px] !shadow-[0_0_0_1px_#4a4a4a,0_4px_20px_4px_rgba(0,0,0,0.5)]">
      <div className={`flex h-[29px] shrink-0 items-center bg-white pl-[8px] ${SEGOE}`}>Rating Curve</div>
      <Teal className="ml-[8px] mt-[5px] w-[550px]">River: Example4  Reach: Main  RS: 0</Teal>
      <div className="mt-[8px] flex h-[21px] shrink-0 items-start">
        <Radio className="ml-[9px] mt-[2px]" /><T className="ml-[4px] mt-[1px]">Read from DSS before simulation</T>
        <Btn strong className="ml-auto mr-[6px] h-[21px] w-[185px] p-[4px]">
          <span className="flex size-full items-center justify-center outline-1 outline-dotted outline-black">Select DSS file and Path</span>
        </Btn>
      </div>
      <div className="mt-[3px] flex h-[18px] shrink-0"><T className="ml-[23px] w-[33px] pt-[4px]">File:</T><Box className="h-[18px] w-[503px] bg-white" /></div>
      <div className="mt-[2px] flex h-[18px] shrink-0"><T className="ml-[23px] w-[33px] pt-[4px]">Path:</T><Box className="h-[18px] w-[503px] bg-white" /></div>
      <div className="mt-[25px] flex h-[14px] shrink-0"><Radio on className="ml-[9px]" /><T className="ml-[4px] pt-px">Enter Table</T></div>
      <div className="mt-[10px] flex h-[21px] shrink-0"><Btn className="ml-[264px] w-[61px]">Del Row</Btn><Btn className="ml-[7px] w-[61px]">Ins Row</Btn></div>
      <Teal className="ml-[20px] mt-[3px] w-[538px]">Hydrograph Data</Teal>
      <div className={`ml-[21px] mt-[1px] flex h-[455px] w-[537px] shrink-0 overflow-hidden p-[2px] ${SUNKEN}`}>
        <div className="flex w-[517px] flex-col overflow-hidden">
          <div className="flex h-[16px] shrink-0 border-b border-black">
            <span className="w-[17px] border-r border-black shadow-[inset_1px_1px_#fff]" />
            <span className="flex w-[252px] items-center justify-center border-r border-black pr-[2px] pt-px shadow-[inset_1px_1px_#fff]">Stage (m)</span>
            <span className="flex flex-1 items-center justify-center pt-px shadow-[inset_1px_1px_#fff]">Flow (m3/s)</span>
          </div>
          {CURVE.map(([s, f], i) => (
            <div key={i} className="flex h-[16px] shrink-0 bg-white">
              <span className="flex w-[17px] items-center justify-end border-b border-r border-black bg-[#f0f0f0] pr-[2px] pt-[2px] shadow-[inset_1px_1px_#fff]">{i < 27 ? i + 1 : ""}</span>
              <span className="flex w-[252px] items-center border-b border-r border-[#c0c0c0] pl-[2px] pt-[2px]">{s}</span>
              <span className="flex flex-1 items-center border-b border-[#c0c0c0] pl-[3px] pt-[2px]">{f}</span>
            </div>
          ))}
        </div>
        <div className="flex w-[16px] flex-col justify-between bg-[#f7f7f7]">
          <div><Btn className="h-[17px] w-[16px]"><Tri dir="up" /></Btn><Btn className="h-[17px] w-[16px]" /></div>
          <Btn className="h-[16px] w-[16px]"><Tri /></Btn>
        </div>
      </div>
      <div className="mt-[5px] flex h-[21px] shrink-0 pl-[297px]">
        <Btn className="w-[78px]">Plot Data</Btn><Btn className="ml-[15px] w-[78px]">OK</Btn><Btn className="ml-[15px] w-[78px]">Cancel</Btn>
      </div>
    </Win>
  );
}

function AnimationWindow() {
  return (
    <Win className="left-[352px] top-[785px] h-[55px] w-[240px]">
      <div className="flex h-[30px] shrink-0 items-center bg-white">
        <svg width="16" height="16" viewBox="0 0 16 16" className="ml-[8px]"><path d="M0 0h16v16H0z" fill="#c0c0c0" /><path d="M6 2h2v3H6zM7 5v4M7 6l-2 2M7 6l4 1M7 9l-5 5M7 9l3 3v2M1 14.500h6l3-3 5 3" fill="none" stroke="#333" /></svg>
        <span className={`ml-[5px] text-[#999] ${SEGOE}`}>Animation Control</span>
      </div>
      <T className="ml-[4px] mt-[3px]">01JAN2020 0030</T>
    </Win>
  );
}

function DesktopIcons() {
  const label = "whitespace-nowrap text-center text-white [text-shadow:1px_1px_1px_#000,0_0_2px_#000]";
  return (
    <div className={`absolute left-0 top-[704px] flex ${SEGOE}`}>
      <div className="flex w-[49px] flex-col">
        <svg width="28" height="38" viewBox="0 0 28 38">
          <path d="M0 1C16 0 22 8 21 16c-1 8-9 14-21 15v-4c9-1 15-5 16-12C17 8 10 5 0 6z" fill="#a5a8ae" stroke="#777" strokeWidth=".5" />
          <path d="M0 10h8q10 0 10 8 0 5-5 7l8 13h-8L6 26H0v-5h7q4 0 4-3t-4-3H0z" fill="#1c64bd" />
        </svg>
        <span className={`mt-[8px] flex w-[27px] justify-end ${label}`}>R 3.6.2</span>
      </div>
      <div className="flex w-[54px] flex-col items-center">
        <svg width="48" height="44" viewBox="0 0 48 44">
          <path d="M4 0h42v36H4z" fill="#c8c8c8" stroke="#888" /><path d="M5 0h40v30H5z" fill="#2e3233" />
          <path d="M7 33.500h36" stroke="#999" strokeWidth="4" strokeDasharray="2 1" />
          <path d="M36 5H20q-5 1-5 6v9q0 5 5 6h16" fill="none" stroke="#aaa" strokeWidth="5.500" /><path d="M36 5H20q-5 1-5 6v9q0 5 5 6h16" fill="none" stroke="#000" strokeWidth="4" />
          <path d="M20 11l17 5-16 5 3-5z" fill="#12d812" />
          <path d="M1.500 30.500h12v12h-12z" fill="#f4f4f4" stroke="#999" /><path d="M4 40q0-5 5-6v-2h3v5H7q-2 1-1 3z" fill="#2458a8" />
        </svg>
        <span className={`mt-[2px] tracking-[-0.4px] ${label}`}>Cygwin64</span>
        <span className={`leading-[14px] ${label}`}>Terminal</span>
      </div>
    </div>
  );
}

export default function App() {
  return (
    <main className="relative h-[898px] w-[1572px] overflow-hidden bg-[linear-gradient(100deg,#00b6ff_0%,#00b3fd_30%,#0098ea_60%,#0078dd_78%,#0046c0_100%)]">
      <DesktopIcons />
      <Explorer />
      <ProfilePlotWindow />
      <GeometryWindow />
      <HecRasWindow />
      <CrossSectionWindows />
      <AnimationWindow />
      <UnsteadyWindow />
      <FlowPlotWindow />
      <FlowEditor />
      <RatingCurve />
    </main>
  );
}
